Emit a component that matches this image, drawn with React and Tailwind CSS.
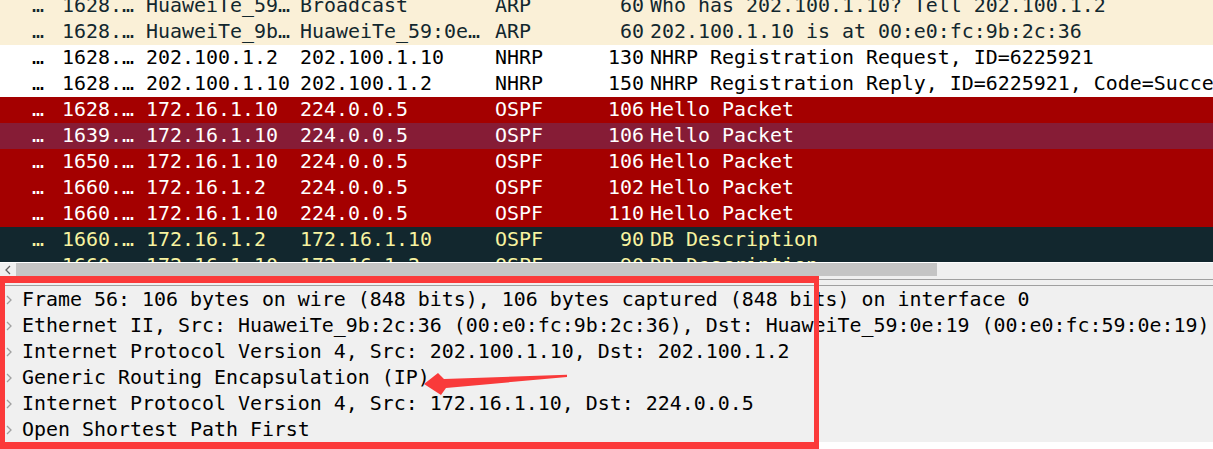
import React from "react";

const ROWS = [
  { t: "arp", no: "1628.…", src: "HuaweiTe_59…", dst: "Broadcast", proto: "ARP", len: "60", info: "Who has 202.100.1.10? Tell 202.100.1.2" },
  { t: "arp", no: "1628.…", src: "HuaweiTe_9b…", dst: "HuaweiTe_59:0e…", proto: "ARP", len: "60", info: "202.100.1.10 is at 00:e0:fc:9b:2c:36" },
  { t: "plain", no: "1628.…", src: "202.100.1.2", dst: "202.100.1.10", proto: "NHRP", len: "130", info: "NHRP Registration Request, ID=6225921" },
  { t: "plain", no: "1628.…", src: "202.100.1.10", dst: "202.100.1.2", proto: "NHRP", len: "150", info: "NHRP Registration Reply, ID=6225921, Code=Success" },
  { t: "red", no: "1628.…", src: "172.16.1.10", dst: "224.0.0.5", proto: "OSPF", len: "106", info: "Hello Packet" },
  { t: "sel", no: "1639.…", src: "172.16.1.10", dst: "224.0.0.5", proto: "OSPF", len: "106", info: "Hello Packet" },
  { t: "red", no: "1650.…", src: "172.16.1.10", dst: "224.0.0.5", proto: "OSPF", len: "106", info: "Hello Packet" },
  { t: "red", no: "1660.…", src: "172.16.1.2", dst: "224.0.0.5", proto: "OSPF", len: "102", info: "Hello Packet" },
  { t: "red", no: "1660.…", src: "172.16.1.10", dst: "224.0.0.5", proto: "OSPF", len: "110", info: "Hello Packet" },
  { t: "dark", no: "1660.…", src: "172.16.1.2", dst: "172.16.1.10", proto: "OSPF", len: "90", info: "DB Description" },
  { t: "dark", no: "1660.…", src: "172.16.1.10", dst: "172.16.1.2", proto: "OSPF", len: "90", info: "DB Description" },
];

const ROW_STYLE = {
  arp: "bg-[#faf0d7] text-[#12272e]",
  plain: "bg-white text-black",
  red: "bg-[#a40000] text-white",
  sel: "bg-[#861c36] text-white",
  dark: "bg-[#12272e] text-[#f7f3a0]",
};

const DETAILS = [
  "Frame 56: 106 bytes on wire (848 bits), 106 bytes captured (848 bits) on interface 0",
  "Ethernet II, Src: HuaweiTe_9b:2c:36 (00:e0:fc:9b:2c:36), Dst: HuaweiTe_59:0e:19 (00:e0:fc:59:0e:19)",
  "Internet Protocol Version 4, Src: 202.100.1.10, Dst: 202.100.1.2",
  "Generic Routing Encapsulation (IP)",
  "Internet Protocol Version 4, Src: 172.16.1.10, Dst: 224.0.0.5",
  "Open Shortest Path First",
];

function Chevron({ className }) {
  return (
    <svg width="6" height="10" viewBox="0 0 6 10" className={className}>
      <path d="M1 1 L5 5 L1 9" fill="none" stroke="currentColor" strokeWidth="1.3" />
    </svg>
  );
}

export default function App() {
  return (
    <div className="relative h-[449px] w-[1213px] overflow-hidden bg-white font-['DejaVu_Sans_Mono',monospace] text-[19.93px]">
      {/* packet list */}
      <div className="h-[262px] overflow-hidden">
        <div className="-mt-[7px]">
          {ROWS.map((r, i) => (
            <div key={i} className={`flex h-[26px] items-center whitespace-nowrap leading-[26px] ${ROW_STYLE[r.t]}`}>
              <div className="w-[62px] shrink-0 pl-[32px]">…</div>
              <div className="w-[84px] shrink-0">{r.no}</div>
              <div className="w-[154px] shrink-0">{r.src}</div>
              <div className="w-[195px] shrink-0">{r.dst}</div>
              <div className="w-[95px] shrink-0">{r.proto}</div>
              <div className="w-[54px] shrink-0 text-right">{r.len}</div>
              <div className="pl-[6px]">{r.info}</div>
            </div>
          ))}
        </div>
      </div>

      {/* horizontal scrollbar */}
      <div className="mt-px flex h-[13px] bg-[#f0f0f0]">
        <div className="flex w-[16px] items-center justify-center text-[#606060]">
          <Chevron className="rotate-180" />
        </div>
        <div className="w-[921px] bg-[#c5c5c5]" />
      </div>

      {/* splitter */}
      <div className="h-[3px] bg-[#f0f0f0]" />
      <div className="h-px bg-[#a0a0a0]" />
      <div className="h-[5px] bg-[#f0f0f0]" />
      <div className="h-px bg-[#a0a0a0]" />

      {/* packet details */}
      <div className="h-[156px] bg-[#f0f0f0] pt-[1px] text-black">
        {DETAILS.map((d, i) => (
          <div key={i} className="flex h-[26px] items-center whitespace-nowrap leading-[26px]">
            <div className="flex w-[22px] shrink-0 justify-start pl-[6px] text-[#a0a0a0]">
              <Chevron />
            </div>
            <div>{d}</div>
          </div>
        ))}
      </div>

      {/* annotation: red box */}
      <div className="pointer-events-none absolute left-0 top-[276px] h-[173px] w-[819px] border-x-[5px] border-y-[7px] border-[#fb3a3a]" />

      {/* annotation: arrow */}
      <svg className="pointer-events-none absolute left-0 top-0" width="1213" height="449">
        <polygon
          points="424,384 438,373 444,379 567,374.8 567,377 446,388 441,395"
          fill="#f93a3a"
        />
      </svg>
    </div>
  );
}
